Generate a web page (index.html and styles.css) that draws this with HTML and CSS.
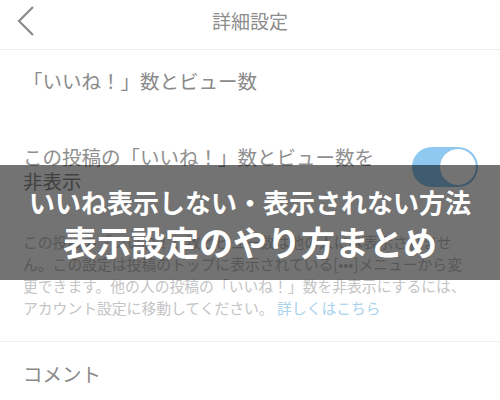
FILE: index.html
```html
<!DOCTYPE html>
<html lang="ja">
<head>
<meta charset="UTF-8">
<meta name="viewport" content="width=device-width, initial-scale=1.0">
<title>詳細設定</title>
<link rel="stylesheet" href="styles.css">
</head>
<body>
<div class="screen">
    <header class="topbar">
        <svg class="back" width="20" height="32" viewBox="0 0 20 32">
            <polyline points="16,3 2,17 16,31" fill="none" stroke="#8a8a8a" stroke-width="2.2"/>
        </svg>
        <div class="title">詳細設定</div>
        <div></div>
    </header>

    <section class="block">
        <h2 class="block-title">「いいね！」数とビュー数</h2>

        <div class="setting">
            <div class="setting-label">この投稿の「いいね！」数とビュー数を非表示</div>
            <div class="toggle on"><span class="knob"></span></div>
        </div>

        <p class="note">この投稿の「いいね！」数とビュー数は他の人には表示されませ<br>ん。この設定は投稿のトップに表示されている[•••]メニューから変<br>更できます。他の人の投稿の「いいね！」数を非表示にするには、<br>アカウント設定に移動してください。 <a href="#">詳しくはこちら</a></p>
    </section>

    <section class="block last">
        <h2 class="block-title">コメント</h2>
    </section>

    <!-- caption band laid over the settings screen -->
    <div class="banner">
        <div class="banner-sub">いいね表示しない・表示されない方法</div>
        <div class="banner-main">表示設定のやり方まとめ</div>
    </div>
</div>
</body>
</html>
```

FILE: styles.css
```css
body {
    margin: 0;
    padding: 0;
    background-color: #fff;
    font-family: "Noto Sans CJK JP", "Noto Sans", sans-serif;
    color: #8a8a8a;
}

.screen {
    position: relative;
    width: 500px;
    height: 400px;
    overflow: hidden;
}

.topbar {
    display: grid;
    grid-template-columns: 1fr auto 1fr;
    align-items: center;
    height: 49px;
    border-bottom: 1px solid #ececec;
}

.back {
    margin-left: 17px;
    margin-top: -10px;
}

.title {
    font-size: 19px;
    line-height: 26px;
    margin-top: -7px;
    color: #8c8c8c;
}

.block {
    padding: 0 23px;
}

.block-title {
    margin: 18px 0 0;
    font-size: 19.5px;
    line-height: 26px;
    font-weight: normal;
    color: #8a8a8a;
}

.setting {
    display: flex;
    align-items: center;
    justify-content: space-between;
    margin-top: 51px;
}

.setting-label {
    width: 362px;
    font-size: 19.5px;
    line-height: 24px;
    color: #8f8f8f;
}

.toggle {
    width: 66px;
    height: 40px;
    margin-right: -1px;
    margin-top: -4px;
    border-radius: 20px;
    background-color: #e6e6e6;
    display: flex;
    align-items: center;
    padding: 2px;
    box-sizing: border-box;
}

.toggle.on {
    background-color: #8fc9f2;
    justify-content: flex-end;
}

.knob {
    width: 36px;
    height: 36px;
    border-radius: 50%;
    background-color: #fff;
    box-shadow: 0 0 1px rgba(0, 0, 0, 0.25);
}

.note {
    margin: 38px 0 0;
    font-size: 14.8px;
    line-height: 22px;
    color: #c4c4c4;
    white-space: nowrap;
}

.note a {
    color: #a9d2ee;
    text-decoration: none;
}

.block.last {
    margin-top: 22px;
    border-top: 1px solid #f1f1f1;
}

.block.last .block-title {
    margin-top: 19px;
}

.banner {
    position: absolute;
    left: 0;
    top: 165px;
    width: 100%;
    height: 115px;
    background-color: rgba(0, 0, 0, 0.55);
    color: #fff;
    text-align: center;
    font-weight: bold;
    box-sizing: border-box;
    padding-top: 19px;
}

.banner-sub {
    font-size: 26px;
    line-height: 36px;
}

.banner-main {
    font-size: 34px;
    line-height: 44px;
}
```
